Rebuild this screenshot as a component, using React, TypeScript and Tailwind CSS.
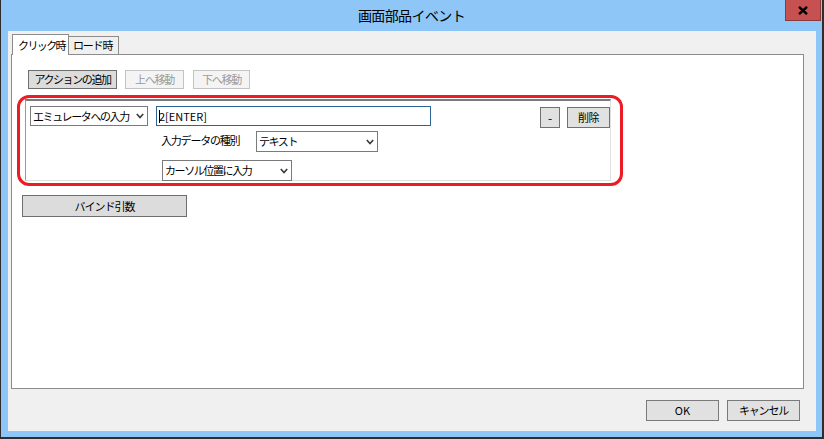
import React from "react";

const jp = { fontFamily: '"Noto Sans CJK JP", "Noto Sans", sans-serif' };

function Chevron() {
  return (
    <svg width="8" height="6" viewBox="0 0 8 6" className="shrink-0">
      <polyline points="0.8,1 4,4.6 7.2,1" fill="none" stroke="#3a3a3a" strokeWidth="1.6" />
    </svg>
  );
}

function Select({ label, w, h }: { label: string; w: string; h: string }) {
  return (
    <div
      className={`flex items-center justify-between border border-[#7a7a7a] bg-white pl-[2px] pr-[3px] text-[11px] tracking-[-1.4px] text-black leading-none ${w} ${h}`}
    >
      <span className="whitespace-nowrap">{label}</span>
      <Chevron />
    </div>
  );
}

export default function App() {
  return (
    <div className="w-[824px] h-[439px] bg-[#8ec7f7] border-l border-r-2 border-b-2 border-[#2e2e2e] flex flex-col" style={jp}>
      {/* title bar */}
      <div className="h-[31px] grid grid-cols-[1fr_auto_1fr] items-start shrink-0">
        <div />
        <div className="pt-[6px] text-[14px] tracking-[-0.6px] leading-[18px] text-black">画面部品イベント</div>
        <div className="flex justify-end pr-[1px]">
          <div className="w-[36px] h-[21px] bg-[#c75050] border border-t-0 border-[#8a3a3a] flex items-center justify-center">
            <svg width="10" height="9" viewBox="0 0 10 9">
              <path d="M1 0.8 L9 8.2 M9 0.8 L1 8.2" stroke="#000" strokeWidth="2.4" />
            </svg>
          </div>
        </div>
      </div>

      {/* client */}
      <div className="ml-[7px] mr-[6px] h-[400px] bg-[#f0f0f0] flex flex-col">
        <div className="pt-[3px] pl-[3px] pr-[12px] flex flex-col">
          {/* tabs */}
          <div className="relative z-10 -mb-px h-[21px] flex items-end pl-[1px]">
            <div className="h-[21px] w-[57px] bg-white border-l border-t border-r border-[#8c8c8c] text-[11px] tracking-[-1.6px] leading-none pl-[5px] pt-[5px] text-black whitespace-nowrap">
              クリック時
            </div>
            <div className="h-[19px] w-[50px] bg-[#f0f0f0] border-t border-r border-b border-[#8c8c8c] text-[11px] tracking-[-1.2px] leading-none pl-[4px] pt-[3px] text-black whitespace-nowrap">
              ロード時
            </div>
          </div>

          {/* panel */}
          <div className="h-[335px] border border-[#8c8c8c] bg-white flex flex-col">
            {/* top buttons */}
            <div className="pl-[16px] pt-[15px] flex items-start">
              <div className="w-[89px] h-[19px] bg-[#dcdcdc] border border-[#6e6e6e] flex items-center justify-center text-[11px] tracking-[-1.4px] leading-none text-black">
                アクションの追加
              </div>
              <div className="ml-[8px] w-[59px] h-[19px] bg-[#f4f4f4] border border-[#c3c3c3] flex items-center justify-center text-[11px] tracking-[-1.2px] leading-none text-[#9a9a9a]">
                上へ移動
              </div>
              <div className="ml-[9px] w-[57px] h-[19px] bg-[#f4f4f4] border border-[#c3c3c3] flex items-center justify-center text-[11px] tracking-[-1.2px] leading-none text-[#9a9a9a]">
                下へ移動
              </div>
            </div>

            {/* red annotated action */}
            <div className="ml-[5px] mt-[6px] w-[606px] h-[91px] border-[3px] border-[#ed1c24] rounded-[12px] pl-[5px] pt-[1px]">
              <div className="w-[586px] h-[82px] border-l border-t-2 border-r border-b border-l-[#9a9a9a] border-t-[#7a7a7a] border-r-[#e0e0e0] border-b-[#e0e0e0] bg-white pl-[4px] pt-[5px] flex flex-col">
                {/* row 1 */}
                <div className="flex items-start">
                  <Select label="エミュレータへの入力" w="w-[118px]" h="h-[20px]" />
                  <div className="ml-[8px] w-[275px] h-[20px] border border-[#2d6496] bg-white flex items-center pl-[2px] text-[11px] leading-none text-black">
                    <span className="relative">
                      <span className="absolute left-0 top-[-1px] w-px h-[13px] bg-black" />
                      2[ENTER]
                    </span>
                  </div>
                  <div className="ml-auto mt-[1px] w-[20px] h-[21px] bg-[#e1e1e1] border border-[#707070] flex items-center justify-center text-[12px] leading-none text-black">
                    -
                  </div>
                  <div className="ml-[7px] mt-[1px] w-[43px] h-[21px] bg-[#e1e1e1] border border-[#707070] flex items-center justify-center text-[11px] tracking-[-0.5px] leading-none text-black">
                    削除
                  </div>
                </div>
                {/* row 2 */}
                <div className="mt-[3px] ml-[131px] flex items-start">
                  <div className="w-[95px] pt-[3px] text-[11px] tracking-[-1.2px] leading-[13px] text-black whitespace-nowrap">
                    入力データの種別
                  </div>
                  <Select label="テキスト" w="w-[122px]" h="h-[21px]" />
                </div>
                {/* row 3 */}
                <div className="mt-[8px] ml-[132px] flex">
                  <Select label="カーソル位置に入力" w="w-[130px]" h="h-[21px]" />
                </div>
              </div>
            </div>

            {/* bind button */}
            <div className="ml-[10px] mt-[9px] w-[165px] h-[22px] bg-[#dcdcdc] border border-[#6e6e6e] flex items-center justify-center text-[11px] tracking-[-1px] leading-none text-black">
              バインド引数
            </div>
          </div>
        </div>

        {/* bottom buttons */}
        <div className="mt-[11px] pr-[16px] flex justify-end">
          <div className="w-[73px] h-[21px] bg-[#e1e1e1] border border-[#7a7a7a] flex items-center justify-center text-[11px] leading-none text-black">
            OK
          </div>
          <div className="ml-[8px] w-[73px] h-[21px] bg-[#e1e1e1] border border-[#7a7a7a] flex items-center justify-center text-[11px] tracking-[-1.2px] leading-none text-black">
            キャンセル
          </div>
        </div>
      </div>
    </div>
  );
}
